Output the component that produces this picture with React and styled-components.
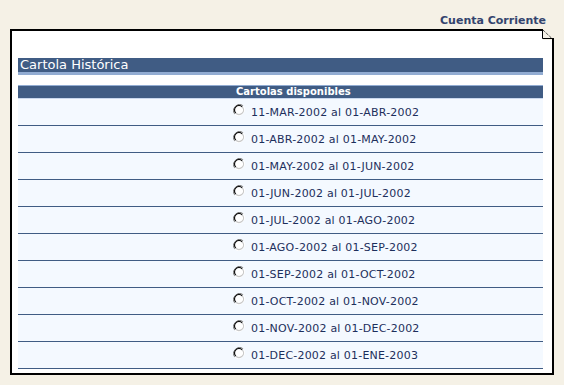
import React from 'react';
import styled, { createGlobalStyle } from 'styled-components';

const periods = [
  '11-MAR-2002 al 01-ABR-2002',
  '01-ABR-2002 al 01-MAY-2002',
  '01-MAY-2002 al 01-JUN-2002',
  '01-JUN-2002 al 01-JUL-2002',
  '01-JUL-2002 al 01-AGO-2002',
  '01-AGO-2002 al 01-SEP-2002',
  '01-SEP-2002 al 01-OCT-2002',
  '01-OCT-2002 al 01-NOV-2002',
  '01-NOV-2002 al 01-DEC-2002',
  '01-DEC-2002 al 01-ENE-2003',
];

const GlobalStyle = createGlobalStyle`
  html, body {
    margin: 0;
    padding: 0;
    background: #f5f1e6;
    font-family: "DejaVu Sans", Verdana, sans-serif;
  }
`;

const Page = styled.div`
  width: 564px;
  height: 385px;
  box-sizing: border-box;
  padding: 12px 10px 0 10px;
`;

const Section = styled.div`
  height: 17px;
  text-align: right;
  padding-right: 8px;
  font-size: 11px;
  font-weight: bold;
  line-height: 17px;
  color: #33446e;
`;

const Sheet = styled.div`
  position: relative;
  width: 544px;
  box-sizing: border-box;
  border: 2px solid #000;
  background: #fff;
  padding: 27px 9px 4px 6px;
`;

const Fold = styled.svg`
  position: absolute;
  top: -2px;
  right: -2px;
  width: 12px;
  height: 12px;
`;

const Title = styled.div`
  height: 14px;
  background: #405c84;
  border-bottom: 3px solid #92acd2;
  color: #fff;
  font-size: 13px;
  line-height: 14px;
  padding-left: 2px;
  white-space: nowrap;
  margin-bottom: 10px;
`;

const HeadRow = styled.div`
  height: 12px;
  background: #405c84;
  border-top: 1px solid #92acd2;
  border-bottom: 1px solid #c9d8ee;
  color: #fff;
  font-size: 10px;
  font-weight: bold;
  line-height: 12px;
  padding-left: ${(p) => p.$indent}px;
`;

const Row = styled.label`
  display: grid;
  grid-template-columns: 209px 12px 1fr;
  column-gap: 6px;
  align-items: center;
  height: 26px;
  background: #f4f9ff;
  border-bottom: 1px solid #405c84;
`;

const Radio = styled.svg`
  grid-column: 2;
  width: 12px;
  height: 12px;
  margin-top: -4px;
`;

const Period = styled.span`
  font-size: 11px;
  color: #1d2f5c;
  letter-spacing: 0.2px;
  white-space: nowrap;
`;

const RadioIcon = () => (
  <Radio viewBox="0 0 12 12">
    <path d="M10.2 1.8 A6 6 0 0 0 1.8 10.2" fill="none" stroke="#808080" strokeWidth="1" />
    <path d="M1.8 10.2 A6 6 0 0 0 10.2 1.8" fill="none" stroke="#ffffff" strokeWidth="1" />
    <circle cx="6" cy="6" r="4.5" fill="#fff" />
    <path d="M9.2 2.8 A4.5 4.5 0 0 0 2.8 9.2" fill="none" stroke="#101010" strokeWidth="1.2" />
    <path d="M2.8 9.2 A4.5 4.5 0 0 0 9.2 2.8" fill="none" stroke="#c8c8c8" strokeWidth="1.2" />
  </Radio>
);

const App = () => (
  <Page>
    <GlobalStyle />
    <Section>Cuenta Corriente</Section>
    <Sheet>
      <Fold viewBox="0 0 12 12">
        <polygon points="1,0 12,0 12,12 10,12 10,11 1,11" fill="#f5f1e6" />
        <polyline points="0.5,0.5 0.5,9.5 10,9.5" fill="none" stroke="#000" strokeWidth="1" />
        <line x1="1" y1="1" x2="10.5" y2="10" stroke="#000" strokeWidth="1" strokeDasharray="1 1" />
        <line x1="11" y1="9" x2="11" y2="12" stroke="#000" strokeWidth="2" />
      </Fold>
      <Title>Cartola Histórica</Title>
      <HeadRow $indent={218}>Cartolas disponibles</HeadRow>
      {periods.map((p) => (
        <Row key={p}>
          <RadioIcon />
          <Period>{p}</Period>
        </Row>
      ))}
    </Sheet>
  </Page>
);

export default App;
